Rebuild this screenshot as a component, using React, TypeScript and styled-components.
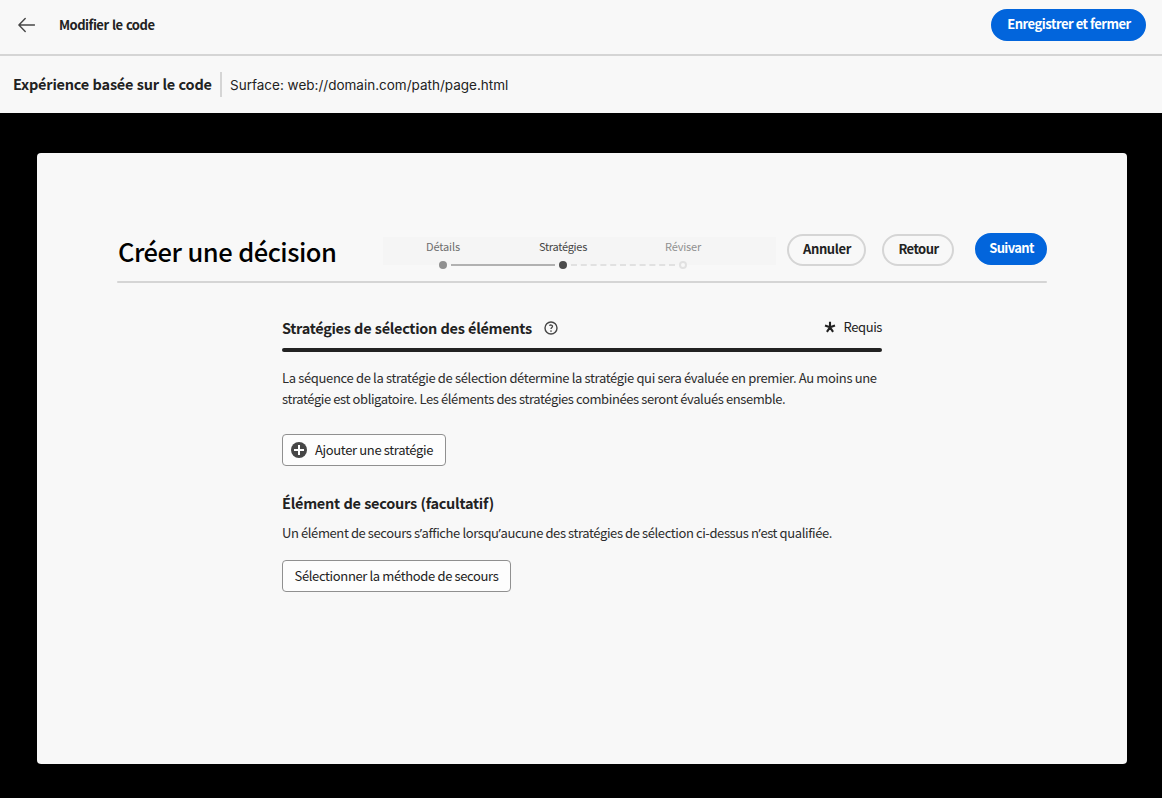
import React from 'react';
import styled, { createGlobalStyle } from 'styled-components';

const sans = '"Noto Sans CJK SC", "Noto Sans", sans-serif';

const GlobalStyle = createGlobalStyle`
  *, *::before, *::after { box-sizing: border-box; }
  body {
    margin: 0;
    background: #000;
    color: #222;
    font-family: ${sans};
    font-size: 13px;
  }
  h1, h2, p { margin: 0; }
  svg { display: block; flex: none; }
`;

const Page = styled.div`
  display: flex;
  flex-direction: column;
  width: 1162px;
  height: 798px;
  overflow: hidden;
  background: #000;
`;

const TopBar = styled.header`
  display: flex;
  align-items: center;
  height: 56px;
  padding: 0 16px 4px 18px;
  background: #f8f8f8;
  border-bottom: 2px solid #d5d5d5;
`;

const TopTitle = styled.span`
  flex: 1;
  margin-left: 24px;
  font-weight: 700;
  line-height: 20px;
  letter-spacing: -0.5px;
  word-spacing: 0.9px;
`;

const SubBar = styled.div`
  display: flex;
  align-items: center;
  height: 57px;
  padding-left: 13px;
  background: #f8f8f8;
`;

const ExperienceName = styled.span`
  width: 207px;
  padding-bottom: 2px;
  font-size: 14.5px;
  font-weight: 700;
  line-height: 22px;
  letter-spacing: -0.22px;
  word-spacing: 0.5px;
  white-space: nowrap;
`;

const Separator = styled.span`
  width: 2px;
  height: 25px;
  background: #d5d5d5;
`;

const Surface = styled.span`
  margin-left: 8px;
  font-family: Inter, sans-serif;
  font-size: 13.5px;
  line-height: 20px;
  white-space: nowrap;
`;

const Card = styled.main`
  width: 1090px;
  height: 611px;
  margin: 40px 0 0 37px;
  padding: 80px 80px 0;
  background: #f8f8f8;
  border-radius: 4px;
`;

const CardHeader = styled.div`
  display: flex;
  align-items: flex-start;
  height: 48px;
`;

const Rule = styled.div<{ $height: number; $color: string }>`
  height: ${(p) => p.$height}px;
  border-radius: ${(p) => p.$height / 2}px;
  background: ${(p) => p.$color};
`;

const Title = styled.h1`
  flex: none;
  width: 266px;
  padding-left: 1px;
  color: #000;
  font-size: 25.5px;
  font-weight: 500;
  line-height: 35px;
  letter-spacing: -0.5px;
  word-spacing: 0.8px;
  white-space: nowrap;
`;

const Stepper = styled.div`
  flex: none;
  width: 393px;
  height: 28px;
  margin-top: 4px;
  background: #f5f5f5;
`;

const StepLabels = styled.div`
  display: grid;
  grid-template-columns: repeat(3, 120px);
  height: 24px;
`;

const StepLabel = styled.span<{ $color: string; $spacing: number }>`
  color: ${(p) => p.$color};
  font-size: 11px;
  line-height: 18px;
  letter-spacing: ${(p) => p.$spacing}px;
  text-align: center;
`;

const Actions = styled.div`
  display: flex;
  flex: 1;
  align-items: flex-start;
  gap: 16px;
  margin-left: 11px;
`;

const PillButton = styled.button<{ $primary?: boolean; $width: number; $spacing: number }>`
  flex: none;
  width: ${(p) => p.$width}px;
  height: 32px;
  margin: ${(p) => (p.$primary ? '0 0 0 5px' : '1px 0 0')};
  padding: 0 0 2px 1px;
  border: 2px solid ${(p) => (p.$primary ? '#0265dc' : '#d5d5d5')};
  border-radius: 16px;
  background: ${(p) => (p.$primary ? '#0265dc' : 'transparent')};
  color: ${(p) => (p.$primary ? '#fff' : '#222')};
  font-family: ${sans};
  font-size: 13px;
  font-weight: 700;
  line-height: 20px;
  letter-spacing: ${(p) => p.$spacing}px;
  white-space: nowrap;
`;

const Content = styled.section`
  width: 600px;
  margin-left: 165px;
`;

const SectionHeader = styled.div`
  display: flex;
  align-items: center;
  height: 65px;
  padding-top: 25px;
`;

const SectionTitle = styled.h2<{ $spacing: number }>`
  font-size: 14.5px;
  font-weight: 700;
  line-height: 22px;
  letter-spacing: ${(p) => p.$spacing}px;
  word-spacing: 0.5px;
  white-space: nowrap;
`;

const HelpSlot = styled.span`
  flex: 1;
  padding-left: 12px;
`;

const Required = styled.span`
  display: flex;
  align-items: center;
  gap: 8px;
  letter-spacing: -0.42px;
  line-height: 20px;
  padding-bottom: 2px;
`;

const Description = styled.p<{ $top: number }>`
  padding-top: ${(p) => p.$top}px;
  color: #2c2c2c;
  line-height: 21px;
  white-space: nowrap;
`;

const TextLine = styled.span<{ $spacing: number }>`
  display: block;
  letter-spacing: ${(p) => p.$spacing}px;
`;

const Apostrophe = styled.span`
  font-family: "Noto Sans", sans-serif;
`;

const OutlineButton = styled.button<{ $width: number; $top: number; $spacing: number }>`
  display: flex;
  align-items: center;
  gap: 8px;
  width: ${(p) => p.$width}px;
  height: 32px;
  margin: ${(p) => p.$top}px 0 0;
  padding: 0 0 0 11.5px;
  border: 1px solid #909090;
  border-radius: 4px;
  background: #fdfdfd;
  color: #222;
  font-family: ${sans};
  font-size: 13px;
  line-height: 20px;
  letter-spacing: ${(p) => p.$spacing}px;
  white-space: nowrap;

  &:has(svg) { padding-left: 8px; }
`;

const Fallback = styled.div`
  padding-top: 26px;
`;

const BackArrow = () => (
  <svg width="17" height="16" viewBox="0 0 17 16" fill="none" stroke="#464646" strokeWidth="1.4" strokeLinecap="round" strokeLinejoin="round">
    <path d="M16.5 8H1M7.2 1.5L.9 8l6.3 6.5" />
  </svg>
);

const HelpIcon = () => (
  <svg width="14" height="14" viewBox="0 0 14 14" fill="none" stroke="#464646">
    <circle cx="7" cy="7" r="6" strokeWidth="1.4" />
    <path d="M5.4 4.6C6.2 3.7 8.7 3.8 8.5 5.5C8.4 6.5 7 6.6 7 8.1" strokeWidth="1.3" />
    <circle cx="7" cy="10" r=".85" fill="#464646" stroke="none" />
  </svg>
);

const AsteriskIcon = () => (
  <svg width="12" height="12" viewBox="0 0 12 12" stroke="#222" strokeWidth="2.1">
    <path d="M6 6.3V.8M6 6.3L11 4.6M6 6.3L9.1 10.8M6 6.3L2.9 10.8M6 6.3L1 4.6" />
  </svg>
);

const AddIcon = () => (
  <svg width="16" height="16" viewBox="0 0 16 16">
    <circle cx="8" cy="8" r="8" fill="#464646" />
    <path d="M8 3v10M3 8h10" stroke="#fff" strokeWidth="2" />
  </svg>
);

const StepTrack = () => (
  <svg width="360" height="8" viewBox="0 0 360 8">
    <circle cx="60" cy="4" r="4" fill="#909090" />
    <path d="M68 4h104" stroke="#b1b1b1" strokeWidth="2" />
    <circle cx="180" cy="4" r="4" fill="#4b4b4b" />
    <path d="M188 4h104" stroke="#e1e1e1" strokeWidth="2" strokeDasharray="6 3.8" />
    <circle cx="300" cy="4" r="3" fill="#f8f8f8" stroke="#e1e1e1" strokeWidth="2" />
  </svg>
);

export default function App() {
  return (
    <Page>
      <GlobalStyle />
      <TopBar>
        <BackArrow />
        <TopTitle>Modifier le code</TopTitle>
        <PillButton $primary $width={155} $spacing={-0.48}>Enregistrer et fermer</PillButton>
      </TopBar>
      <SubBar>
        <ExperienceName>Expérience basée sur le code</ExperienceName>
        <Separator />
        <Surface>Surface: web://domain.com/path/page.html</Surface>
      </SubBar>
      <Card>
        <CardHeader>
          <Title>Créer une décision</Title>
          <Stepper>
            <StepLabels>
              <StepLabel $color="#6e6e6e" $spacing={-0.13}>Détails</StepLabel>
              <StepLabel $color="#464646" $spacing={-0.28}>Stratégies</StepLabel>
              <StepLabel $color="#909090" $spacing={-0.18}>Réviser</StepLabel>
            </StepLabels>
            <StepTrack />
          </Stepper>
          <Actions>
            <PillButton $width={79} $spacing={-0.34}>Annuler</PillButton>
            <PillButton $width={72} $spacing={-0.55}>Retour</PillButton>
            <PillButton $primary $width={72} $spacing={-0.65}>Suivant</PillButton>
          </Actions>
        </CardHeader>
        <Rule $height={2} $color="#d5d5d5" />
        <Content>
          <SectionHeader>
            <SectionTitle $spacing={-0.3}>Stratégies de sélection des éléments</SectionTitle>
            <HelpSlot><HelpIcon /></HelpSlot>
            <Required><AsteriskIcon />Requis</Required>
          </SectionHeader>
          <Rule $height={4} $color="#222" />
          <Description $top={15}>
            <TextLine $spacing={-0.345}>La séquence de la stratégie de sélection détermine la stratégie qui sera évaluée en premier. Au moins une</TextLine>
            <TextLine $spacing={-0.4}>stratégie est obligatoire. Les éléments des stratégies combinées seront évalués ensemble.</TextLine>
          </Description>
          <OutlineButton $width={164} $top={25} $spacing={-0.35}>
            <AddIcon />Ajouter une stratégie
          </OutlineButton>
          <Fallback>
            <SectionTitle $spacing={-0.26}>Élément de secours (facultatif)</SectionTitle>
            <Description $top={8}>
              <TextLine $spacing={-0.4}>
                Un élément de secours s<Apostrophe>’</Apostrophe>affiche lorsqu<Apostrophe>’</Apostrophe>aucune des stratégies de sélection ci-dessus n<Apostrophe>’</Apostrophe>est qualifiée.
              </TextLine>
            </Description>
            <OutlineButton $width={229} $top={16} $spacing={-0.36}>Sélectionner la méthode de secours</OutlineButton>
          </Fallback>
        </Content>
      </Card>
    </Page>
  );
}
